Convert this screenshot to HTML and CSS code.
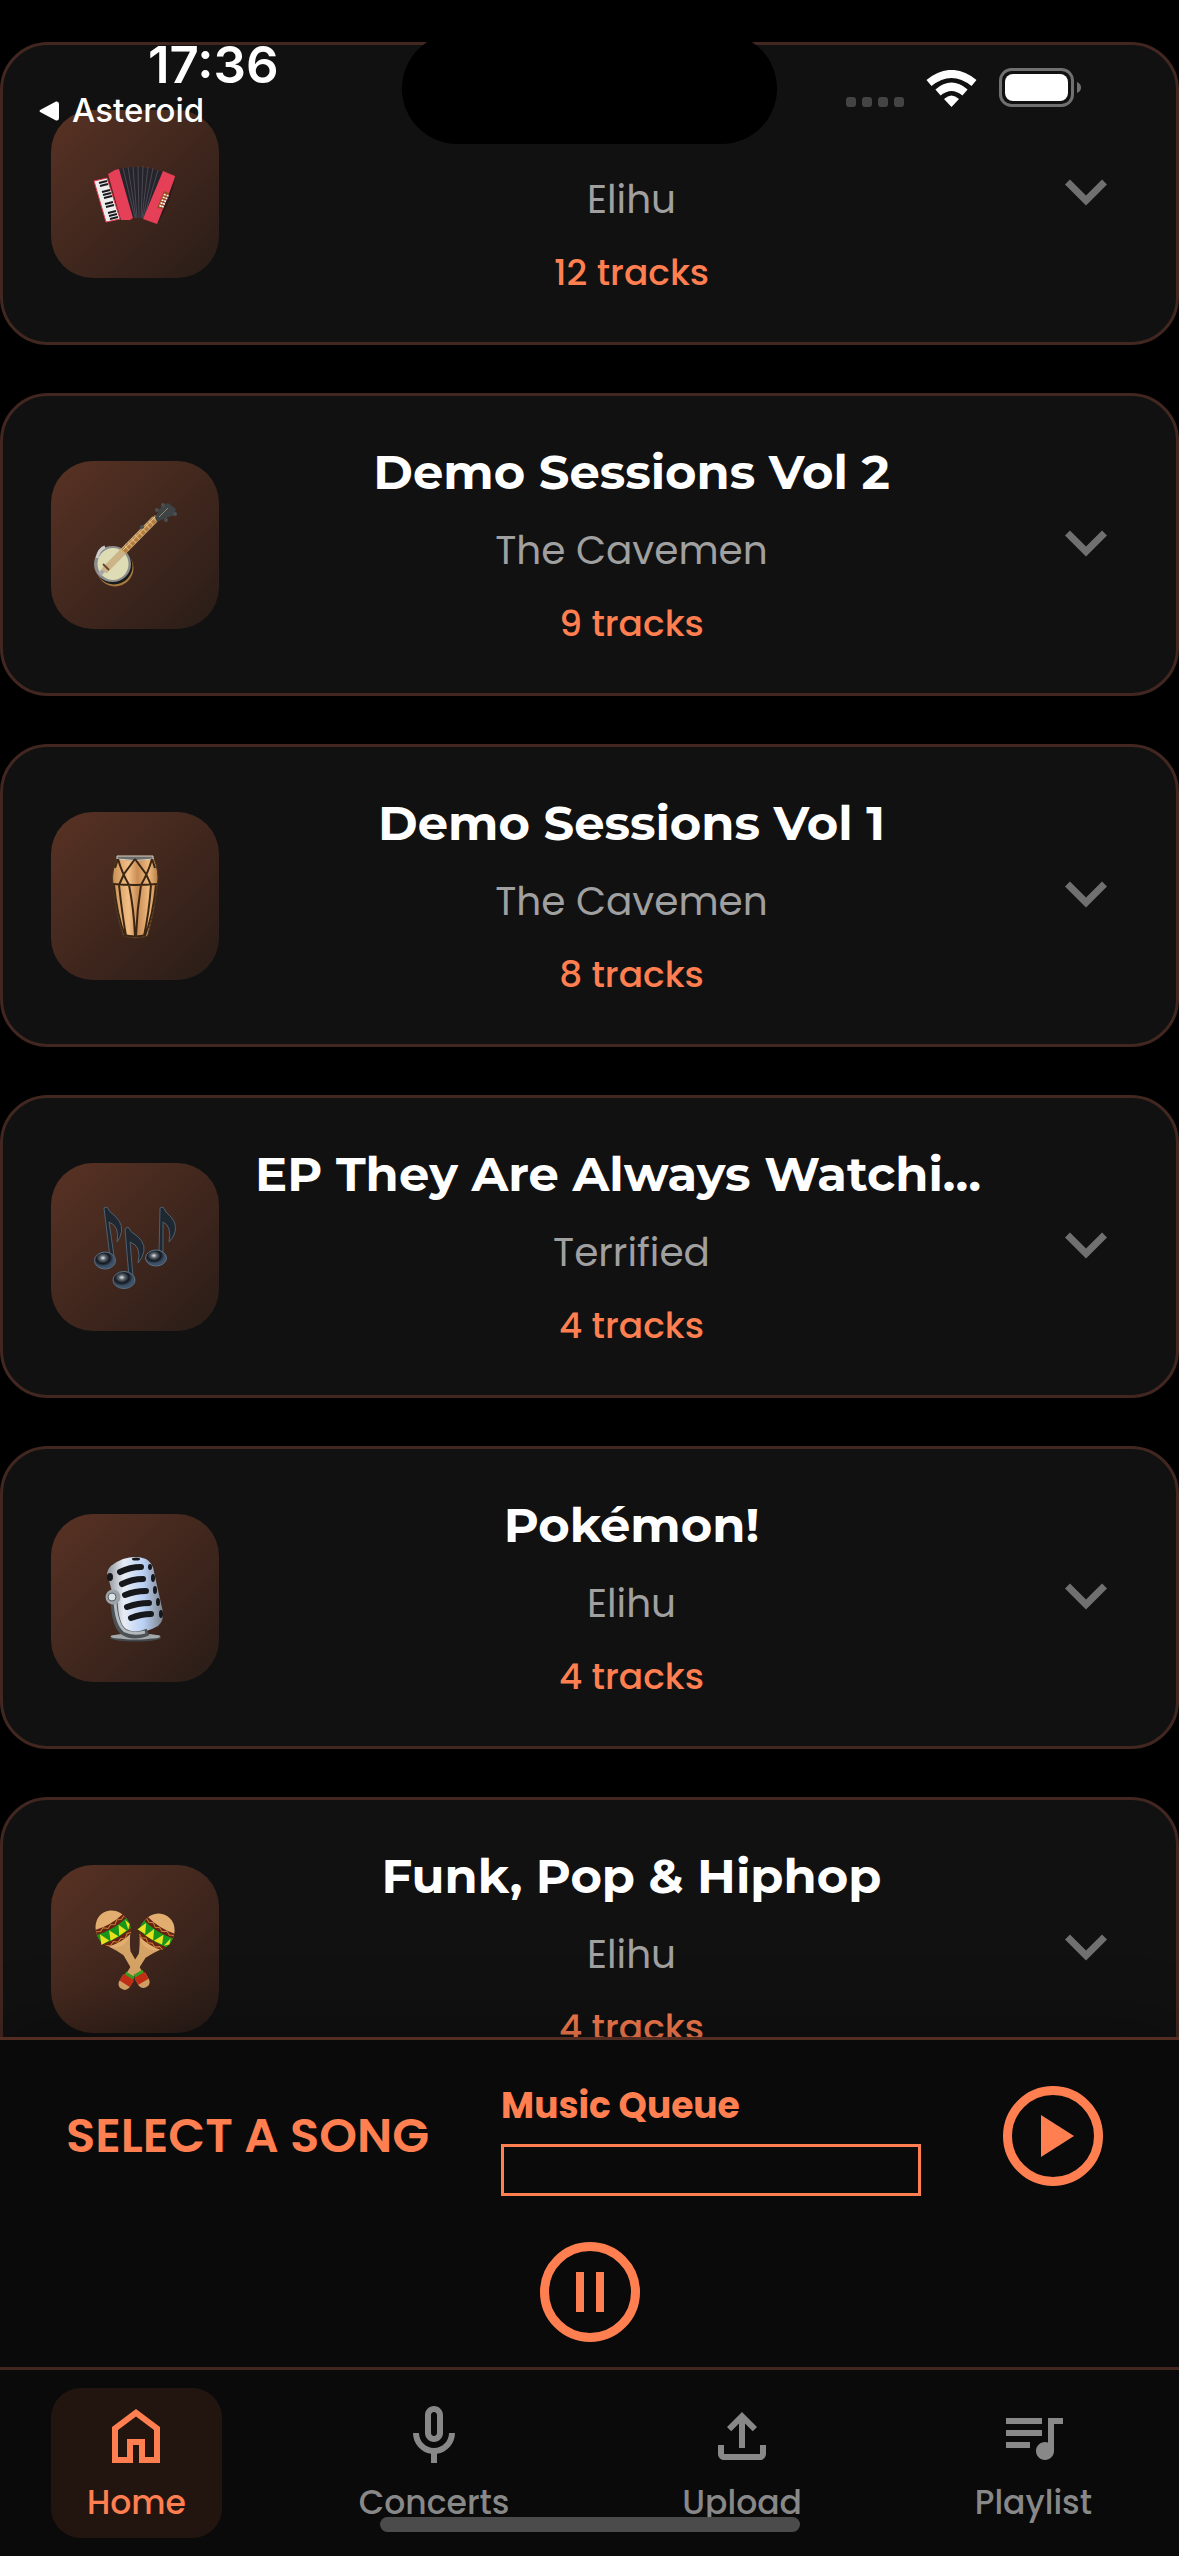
FILE: index.html
```html
<!DOCTYPE html>
<html lang="en">
<head>
<meta charset="utf-8">
<meta name="viewport" content="width=device-width">
<title>Albums</title>
<link rel="stylesheet" href="styles.css">
</head>
<body>
<svg class="defs" aria-hidden="true">
  <defs>
    <symbol id="chevron" viewBox="0 0 24 24"><path d="M7.41 7.84L12 12.42l4.59-4.58L18 9.25l-6 6-6-6z"/></symbol>
    <linearGradient id="wood" x1="0" x2="1"><stop offset="0" stop-color="#c98f55"/><stop offset=".35" stop-color="#f3bf85"/><stop offset=".55" stop-color="#c98d55"/><stop offset=".8" stop-color="#efb97d"/><stop offset="1" stop-color="#b57d45"/></linearGradient>
    <linearGradient id="steel" x1="0" x2="1"><stop offset="0" stop-color="#8d9299"/><stop offset=".3" stop-color="#e8edf5"/><stop offset=".65" stop-color="#b9d0f5"/><stop offset="1" stop-color="#7c8188"/></linearGradient>
    <radialGradient id="ink" cx=".4" cy=".35"><stop offset="0" stop-color="#e4e8ec"/><stop offset=".3" stop-color="#59636d"/><stop offset=".65" stop-color="#14181e"/><stop offset="1" stop-color="#3d5268"/></radialGradient>
  </defs>
</svg>

<header class="status">
  <div class="status-left">
    <span class="clock">17:36</span>
    <a class="back" href="#"><svg viewBox="0 0 20 20"><path d="M2 8.500L17 .5Q20 0 20 3v14q0 3-3 2.500L2 11.500Q-1 10 2 8.500z"/></svg>Asteroid</a>
  </div>
  <div class="island"></div>
  <div class="status-right">
    <svg class="signal" viewBox="0 0 58 10"><g fill="#444"><rect width="10" height="10" rx="3"/><rect x="16" width="10" height="10" rx="3"/><rect x="32" width="10" height="10" rx="3"/><rect x="48" width="10" height="10" rx="3"/></g></svg>
    <svg class="wifi" viewBox="0 0 51 37"><g fill="none" stroke="#fff" stroke-width="8"><path d="M3 13Q25.500-5 48 13"/><path d="M12 22.500Q25.500 11 39 22.500"/></g><path fill="#fff" d="M25.500 37l-7.500-8q7.500-7 15 0z"/></svg>
    <svg class="battery" viewBox="0 0 82 39"><rect x="1.500" y="1.500" width="72" height="36" rx="11" fill="none" stroke="#707070" stroke-width="3"/><rect x="6" y="6" width="63" height="27" rx="8" fill="#fff"/><path d="M78 14q4 1.500 4 5.500t-4 5.500z" fill="#707070"/></svg>
  </div>
</header>

<main class="albums">
  <article class="card">
    <div class="art"><svg viewBox="0 0 84 84">
      <path fill="#26242b" d="M25 17q22-5 45 3L51 67q-6-3-12-1z"/>
      <path stroke="#4b4854" stroke-width="1" fill="none" d="M30 16l12 50M35 15l8 51M40 15l4 51M45 14l1 52M50 14l-2 52M55 15l-6 51M60 16L50 66M65 18L51 66"/>
      <path fill="#eee" stroke="#dd3b52" d="M1 29l13-3 13 41-14 3z"/>
      <path stroke="#1a1a1e" stroke-width="2" d="M6 31l8-2M7 34l8-2M9 40l8-2M10 43l8-2M11 46l8-2M12 52l8-2M13 55l8-2M15 61l8-2M16 64l8-2M17 67l8-2"/>
      <path fill="#e63f58" d="M15 22l7-4 4-1 14 49-3 2-9 0z"/>
      <path fill="#2c1a1c" d="M82 25q-3 23-17 46z"/>
      <path fill="#e63f58" d="M70 19l12 5q0 3-18 48l-14-5z"/>
      <path fill="#9c4b24" d="M71 39l5 2-6 16-6-1z"/>
      <path stroke="#fff" stroke-width="2" stroke-dasharray="1.500 1.500" d="M72 42l-5 13M75 43l-6 13"/>
    </svg></div>
    <div class="info"><h2></h2><p class="artist">Elihu</p><p class="tracks">12 tracks</p></div>
    <button class="expand" aria-label="Show tracks"><svg><use href="#chevron"/></svg></button>
  </article>

  <article class="card">
    <div class="art"><svg viewBox="0 0 84 84">
      <circle cx="22" cy="65" r="18.500" fill="#a57a3c"/>
      <circle cx="21" cy="63" r="18.500" fill="#17191b"/>
      <ellipse cx="19.500" cy="61" rx="18.500" ry="18" fill="#8c8d8b"/>
      <ellipse cx="20" cy="61" rx="15.500" ry="16" fill="#dedcb4"/>
      <path d="M4 55q2-9 8-11" stroke="#ccc" stroke-width="3" fill="none"/>
      <path d="M11 68L62 16" stroke="#cdb488" stroke-width="7"/>
      <path d="M30 49L64 14" stroke="#b27c43" stroke-width="6"/>
      <path d="M30 49L64 14" stroke="#e0b66c" stroke-width="6" stroke-dasharray="1 4"/>
      <path d="M30 47L63 13" stroke="#e9d09a" stroke-width="1"/>
      <path d="M10 61l6 6" stroke="#67472c" stroke-width="2"/><path d="M5 70l4-4 3 3-4 4z" fill="#a9a5a8"/>
      <path d="M62 14l6-10 7-4 8 6-2 6-13 5-4 2z" fill="#3e4345"/><path d="M66 14l9-9" stroke="#9b8360" stroke-width="1"/>
      <g fill="#4b5052"><circle cx="64" cy="7" r="2"/><circle cx="70" cy="2" r="2"/><circle cx="73" cy="17" r="2"/><circle cx="82" cy="11" r="2"/><circle cx="49" cy="24" r="2"/></g>
    </svg></div>
    <div class="info"><h2>Demo Sessions Vol 2</h2><p class="artist">The Cavemen</p><p class="tracks">9 tracks</p></div>
    <button class="expand" aria-label="Show tracks"><svg><use href="#chevron"/></svg></button>
  </article>

  <article class="card">
    <div class="art"><svg viewBox="0 0 84 84">
      <path fill="url(#wood)" stroke="#4a3420" d="M24.500 3h36q6 15 4 27-3 28-10 52-12 4-24 0Q22 58 20 30q-2-12 4.500-27z"/>
      <path fill="#6d6c69" stroke="#d8d0c2" d="M24 2h36v3q-18 3-36 0z"/>
      <g fill="none" stroke="#3a2612" stroke-width="2"><path d="M20 30q22 2 44 0M25 5q4 14 11 26 5 25 6 51M25 5l-3 9M42 5L31 20l-5 11q3 28 7 51M42 5l11 15 5 11q-2 28-7 51M59 5q-4 14-11 26-4 25-5 51M59 5l3 9M21 31q3 30 11 51M63 31q-3 30-11 51M31 81q11 3 22 0"/></g>
    </svg></div>
    <div class="info"><h2>Demo Sessions Vol 1</h2><p class="artist">The Cavemen</p><p class="tracks">8 tracks</p></div>
    <button class="expand" aria-label="Show tracks"><svg><use href="#chevron"/></svg></button>
  </article>

  <article class="card">
    <div class="art"><svg viewBox="0 0 84 84">
      <g fill="#1f2830" stroke="#4d6072" stroke-width="1">
        <path d="M11 3l3-1q2 5 8 9 10 9 5 21l-3 5q3-16-8-20l5 34-4 1z"/>
        <path d="M67 3l3-1q2 5 8 10 8 9 2 20l-4 5q3-16-6-20v32h-4z"/>
        <path d="M32 24l3-2q2 5 9 9 11 9 5 21l-4 6q4-17-8-21l3 34-4 1z"/>
      </g>
      <g fill="url(#ink)" stroke="#5a7085" stroke-width="1"><ellipse cx="12" cy="55.500" rx="10.500" ry="8.500"/><ellipse cx="63" cy="53" rx="10.500" ry="8"/><ellipse cx="31" cy="75" rx="11" ry="8.500"/></g>
    </svg></div>
    <div class="info"><h2>EP They Are Always Watching Us</h2><p class="artist">Terrified</p><p class="tracks">4 tracks</p></div>
    <button class="expand" aria-label="Show tracks"><svg><use href="#chevron"/></svg></button>
  </article>

  <article class="card">
    <div class="art"><svg viewBox="0 0 84 84">
      <ellipse cx="42.500" cy="82" rx="25.500" ry="3.500" fill="#43484c"/><ellipse cx="42.500" cy="80.500" rx="25" ry="3" fill="#a3a8aa"/>
      <path d="M35 72l20-2-2 10H36z" fill="#6d7276"/>
      <path fill="url(#steel)" d="M14 17Q15 9 30 3q13-4 23 0 7 4 8 13l9 40q1 9-5 14-16 9-31 6-6-3-8-14z"/>
      <g stroke="#15171b" stroke-width="6" stroke-linecap="round" fill="none"><path d="M27 16q10-5 21-5M29 28q10-5 21-5M32 39q10-4 21-4M34 51q11-4 22-4M38 62q10-4 20-4"/></g>
      <g fill="#15171b"><ellipse cx="17" cy="21" rx="3" ry="4"/><ellipse cx="57" cy="11" rx="2" ry="3"/><ellipse cx="60" cy="22" rx="2" ry="4"/><ellipse cx="62" cy="34" rx="2" ry="4"/><ellipse cx="65" cy="46" rx="2" ry="4"/><ellipse cx="68" cy="58" rx="2" ry="4"/><ellipse cx="43" cy="3" rx="4" ry="1.500"/></g>
      <path d="M21 44q1 26 10 32 10 6 24 0" stroke="#4c5156" stroke-width="7" fill="none"/><path d="M22 44q1 24 10 31 8 4 20 1" stroke="#b4b9be" stroke-width="3" fill="none"/>
      <circle cx="20" cy="41" r="7.500" fill="#9da3a9"/><circle cx="19" cy="41" r="4" fill="#dce2e6" stroke="#596067" stroke-width="1"/>
    </svg></div>
    <div class="info"><h2>Pokémon!</h2><p class="artist">Elihu</p><p class="tracks">4 tracks</p></div>
    <button class="expand" aria-label="Show tracks"><svg><use href="#chevron"/></svg></button>
  </article>

  <article class="card">
    <div class="art"><svg viewBox="0 0 84 84">
      <defs><g id="maraca">
        <path d="M-13 12Q-7 21-4 28v28h8v-28q3-7 9-16z" fill="#d6a366"/>
        <path d="M-6 54H6v8q-1 5-6 5t-6-5z" fill="#d6a366"/><path d="M-5 50H5v4H-5z" fill="#3b9d22"/><path d="M-6 53H6v8H-6z" fill="#c42f16"/>
        <ellipse rx="17" ry="19" fill="#e2ae70"/>
        <path d="M-16-8Q0-4 16-8 19 6 13 13 0 16-13 13-19 6-16-8z" fill="#682214"/>
        <path d="M-17-3Q0 1 17-3q1 6-1 11Q0 11-16 8q-2-6-1-11z" fill="#17961b"/>
        <path d="M-14-2l5 10-9 0zM-4-1l5 10H-8zM7-1l4 9-9 1zM15-2l2 6-4 4z" fill="#e9e01f"/>
        <path d="M-16-6l4 2 4-2 4 3 4-2 4 2 4-3 4 2 4-2M-14 11l4 2 4-2 4 3 4-2 4 2 4-3 4 1" stroke="#c98334" stroke-width="1" fill="none"/>
      </g></defs>
      <use href="#maraca" transform="translate(64 25) rotate(32)"/>
      <use href="#maraca" transform="translate(20 22) rotate(-30)"/>
    </svg></div>
    <div class="info"><h2>Funk, Pop &amp; Hiphop</h2><p class="artist">Elihu</p><p class="tracks">4 tracks</p></div>
    <button class="expand" aria-label="Show tracks"><svg><use href="#chevron"/></svg></button>
  </article>
</main>

<section class="player" aria-label="Player">
  <div class="player-row">
    <p class="song">SELECT A SONG</p>
    <div class="queue"><h3>Music Queue</h3><ul></ul></div>
    <button class="control" aria-label="Play"><svg viewBox="0 0 120 120"><circle cx="60" cy="60" r="45.500" fill="none" stroke="currentColor" stroke-width="9"/><path d="M48 39l33 21-33 21z" fill="currentColor"/></svg></button>
  </div>
  <button class="control" aria-label="Pause"><svg viewBox="0 0 120 120"><circle cx="60" cy="60" r="45.500" fill="none" stroke="currentColor" stroke-width="9"/><path d="M46 40h8v40h-8zM66 40h8v40h-8z" fill="currentColor"/></svg></button>
</section>

<nav class="tabs">
  <a class="tab active" href="#"><svg viewBox="0 0 24 24"><path fill-rule="evenodd" d="M6 19h3v-6h6v6h3v-9l-6-4.500L6 10v9zM4 21V9l8-6 8 6v12h-7v-6h-2v6z"/></svg>Home</a>
  <a class="tab" href="#"><svg viewBox="0 0 24 24"><path d="M12 14c1.660 0 3-1.340 3-3V5c0-1.660-1.340-3-3-3S9 3.340 9 5v6c0 1.660 1.340 3 3 3zm-1-9c0-.55.45-1 1-1s1 .45 1 1v6c0 .55-.45 1-1 1s-1-.45-1-1V5zm6 6c0 2.760-2.240 5-5 5s-5-2.240-5-5H5c0 3.530 2.610 6.430 6 6.920V21h2v-3.080c3.390-.49 6-3.390 6-6.920h-2z"/></svg>Concerts</a>
  <a class="tab" href="#"><svg viewBox="0 0 24 24"><path d="M18 15v3H6v-3H4v3c0 1.100.9 2 2 2h12c1.100 0 2-.9 2-2v-3h-2zM7 9l1.410 1.410L11 7.830V16h2V7.830l2.590 2.580L17 9l-5-5-5 5z"/></svg>Upload</a>
  <a class="tab" href="#"><svg viewBox="0 0 24 24"><path d="M15 6H3v2h12V6zm0 4H3v2h12v-2zM3 16h8v-2H3v2zM17 6v8.180c-.31-.11-.65-.18-1-.18-1.660 0-3 1.340-3 3s1.340 3 3 3 3-1.340 3-3V8h3V6h-5z"/></svg>Playlist</a>
  <div class="home-indicator"></div>
</nav>
</body>
</html>
```

FILE: styles.css
```css
* { box-sizing: border-box; margin: 0; padding: 0; }

:root {
  --accent: #ff7f50;
  --line: #412720;
  --bar: #0a0a0a;
  --body: "Poppins", "Inter", sans-serif;
  --heading: "Montserrat", "Inter", sans-serif;
}

body {
  display: flex;
  flex-direction: column;
  position: relative;
  height: 100vh;
  overflow: hidden;
  background: #000;
  color: #fff;
  font-family: var(--body);
}

svg { display: block; fill: currentColor; }
.defs { position: absolute; width: 0; height: 0; }
button { border: 0; background: none; color: inherit; }
a { color: inherit; text-decoration: none; }

/* Status bar floats over the scrolled list */
.status {
  position: absolute;
  inset: 0 0 auto;
  z-index: 2;
  display: grid;
  grid-template-columns: 1fr 375px 1fr;
  padding-top: 33px;
  font-family: "Inter", sans-serif;
}
.status-left { display: flex; flex-direction: column; padding-left: 39px; }
.clock { padding-left: 109px; font-size: 51px; font-weight: 600; line-height: 64px; }
.back { display: flex; align-items: center; gap: 13px; font-size: 33px; font-weight: 500; line-height: 27px; }
.back svg { width: 20px; height: 20px; }
.island { height: 111px; border-radius: 56px; background: #000; }
.status-right { display: flex; justify-content: flex-end; align-items: flex-end; gap: 22px; height: 74px; padding-right: 98px; }
.signal { width: 58px; height: 10px; }
.wifi { width: 51px; height: 37px; }
.battery { width: 82px; height: 39px; }

/* Album list */
.albums {
  flex: 1;
  min-height: 0;
  overflow: hidden;
  display: flex;
  flex-direction: column;
  gap: 48px;
  padding-top: 42px;
}
.card {
  flex: none;
  display: flex;
  align-items: center;
  gap: 36px;
  padding: 48px;
  border: 3px solid var(--line);
  border-radius: 48px;
  background: #111;
}
.art {
  flex: none;
  display: grid;
  place-items: center;
  width: 168px;
  height: 168px;
  border-radius: 42px;
  background: linear-gradient(135deg, rgba(255, 127, 80, .3), rgba(255, 127, 80, .1));
}
.art svg { width: 84px; height: 84px; overflow: visible; }
.info {
  flex: 1;
  min-width: 0;
  display: flex;
  flex-direction: column;
  text-align: center;
}
.info h2 {
  min-height: 57px;
  overflow: hidden;
  white-space: nowrap;
  text-overflow: ellipsis;
  font: 700 48px/57px var(--heading);
}
.artist { margin-top: 21px; color: #a0a0a0; font-size: 39px; line-height: 58px; }
.tracks { margin-top: 23px; color: var(--accent); font-size: 36px; font-weight: 500; line-height: 42px; }
.expand { flex: none; color: #707070; }
.expand svg { width: 84px; height: 84px; }

/* Player */
.player {
  position: relative;
  flex: none;
  display: flex;
  flex-direction: column;
  align-items: center;
  gap: 36px;
  padding: 36px 66px 15px;
  border-top: 3px solid #532d21;
  background: var(--bar);
  box-shadow: 0 -12px 60px rgba(0, 0, 0, .3);
  color: var(--accent);
}
.player-row { display: flex; align-items: center; justify-content: space-between; width: 100%; }
.song { font-size: 48px; font-weight: 600; line-height: 72px; white-space: nowrap; }
.queue { display: flex; flex-direction: column; gap: 9px; width: 420px; }
.queue h3 { font-size: 36px; font-weight: 700; line-height: 58px; }
.queue ul { height: 52px; border: 3px solid; list-style: none; }
.control svg { width: 120px; height: 120px; }

/* Tab bar */
.tabs {
  position: relative;
  flex: none;
  display: flex;
  justify-content: space-between;
  padding: 18px 51px;
  border-top: 3px solid var(--line);
  background: var(--bar);
}
.tab {
  display: flex;
  flex-direction: column;
  align-items: center;
  gap: 6px;
  padding: 12px 36px 10px;
  border-radius: 30px;
  color: #888;
  font-size: 33px;
  font-weight: 500;
  line-height: 50px;
}
.tab svg { width: 72px; height: 72px; }
.tab.active { background: rgba(255, 127, 80, .1); color: var(--accent); }
.home-indicator {
  position: absolute;
  bottom: 24px;
  left: 50%;
  width: 420px;
  height: 15px;
  margin-left: -210px;
  border-radius: 8px;
  background: #4b4b4b;
}
```
